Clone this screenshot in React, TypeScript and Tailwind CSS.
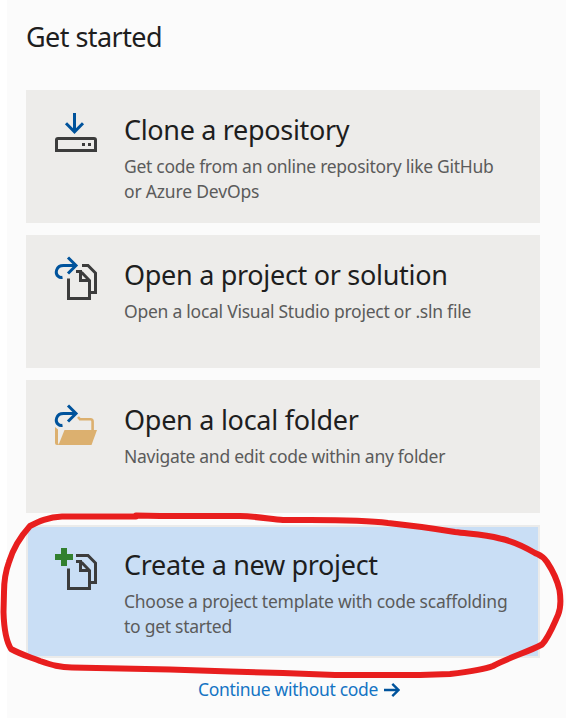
import type { ReactNode } from "react";

const NAVY = "#00539c";
const INK = "#3c3c3c";

function Pages() {
  return (
    <g fill="none" stroke={INK} strokeWidth="3">
      <path d="M28.5 33.5V53.5H49.5V35.5L41.5 27.3" />
      <path d="M36 26.5H40.5V35.5H49.5" />
      <path d="M51 47.5H55.5V28L48 20.5H42" />
    </g>
  );
}

function OpenArrow() {
  return (
    <g fill="none" stroke={NAVY} strokeWidth="3">
      <path d="M36 20.5H23.5C16 20.5 14.5 28.5 18.5 31.5Q20 32.8 22.5 32.3" />
      <path d="M28 12.5L36 20.5L28 28.5" />
    </g>
  );
}

function Icon({ children }: { children: ReactNode }) {
  return (
    <svg className="mt-5 h-12 w-12 shrink-0" viewBox="12 10 48 48">
      {children}
    </svg>
  );
}

const cards = [
  {
    title: "Clone a repository",
    titleClass: "tracking-[-0.33px]",
    lines: [
      { text: "Get code from an online repository like GitHub", cls: "tracking-[-0.28px]" },
      { text: "or Azure DevOps", cls: "tracking-[-0.18px]" },
    ],
    icon: (
      <Icon>
        <path d="M34.5 13V31M26 23.3L34.5 31.8L43 23.3" fill="none" stroke={NAVY} strokeWidth="3" />
        <path d="M16.5 50.5V40Q16.5 38.5 18 38.5H54Q55.5 38.5 55.5 40V50.5Z" fill="none" stroke={INK} strokeWidth="3" />
        <path d="M42 43h3v3h-3zM48 43h3v3h-3z" fill={INK} />
      </Icon>
    ),
  },
  {
    title: "Open a project or solution",
    titleClass: "tracking-[-0.3px]",
    lines: [{ text: "Open a local Visual Studio project or .sln file", cls: "tracking-[-0.25px]" }],
    icon: (
      <Icon>
        <Pages />
        <OpenArrow />
      </Icon>
    ),
  },
  {
    title: "Open a local folder",
    titleClass: "tracking-[-0.27px]",
    lines: [{ text: "Navigate and edit code within any folder", cls: "tracking-[-0.28px]" }],
    icon: (
      <Icon>
        <path d="M38 27L40 29.3H50.5Q52.6 29.3 52.6 31.5V41" fill="none" stroke="#dcb06f" strokeWidth="2.6" />
        <path d="M15 37L18 39.5V53L19 55H17Q15 55 15 53Z" fill="#dcb06f" />
        <path d="M24.5 40H57L51.5 55H18.5Z" fill="#dcb06f" />
        <g transform="translate(0 3)">
          <OpenArrow />
        </g>
      </Icon>
    ),
  },
  {
    title: "Create a new project",
    titleClass: "tracking-[-0.33px]",
    selected: true,
    lines: [
      { text: "Choose a project template with code scaffolding", cls: "tracking-[-0.25px]" },
      { text: "to get started", cls: "tracking-[-0.27px]" },
    ],
    icon: (
      <Icon>
        <Pages />
        <path d="M36 20.5H43" stroke={INK} strokeWidth="3" />
        <path d="M21 13h6v6h6v6h-6v6h-6v-6h-6v-6h6z" fill="#32802f" />
      </Icon>
    ),
  },
];

export default function App() {
  return (
    <div className="relative h-[718px] w-[566px] overflow-hidden bg-white pl-[7px] font-['Noto_Sans',sans-serif]">
      <main className="flex h-full flex-col bg-[#fbfbfb] pl-[19px]">
        <h1 className="h-[90px] pt-[19px] text-[27px] leading-9 whitespace-nowrap text-[#1e1e1e]">
          <span className="tracking-[-0.56px]">Get started</span>
        </h1>
        <div className="flex w-[514px] flex-col gap-3">
          {cards.map((card) => (
            <button
              key={card.title}
              type="button"
              className={`flex h-[133px] items-start border-2 text-left ${
                card.selected ? "border-[#ebebea] bg-[#c9def5]" : "border-[#edecea] bg-[#edecea]"
              }`}
            >
              <span className="-mt-0.5 flex gap-6 pl-6">
                {card.icon}
                <span className="flex flex-col pt-[22px] whitespace-nowrap">
                  <span className="text-[27px] leading-9 text-[#1e1e1e]">
                    <span className={card.titleClass}>{card.title}</span>
                  </span>
                  <span className="mt-1.5 flex flex-col text-[17.5px] leading-[25px] text-[#5b5b5b]">
                    {card.lines.map((line) => (
                      <span key={line.text} className={line.cls}>
                        {line.text}
                      </span>
                    ))}
                  </span>
                </span>
              </span>
            </button>
          ))}
        </div>
        <a className="mt-[19px] flex items-center pl-[172px] text-[17.5px] leading-[25px] whitespace-nowrap text-[#1474c4]">
          <span className="w-[186px] tracking-[-0.31px]">Continue without code</span>
          <svg className="h-4 w-4 shrink-0" viewBox="0 0 16 16" fill="none" stroke={NAVY} strokeWidth="2.4">
            <path d="M0 8H14M8.3 1.8L14.5 8L8.3 14.2" />
          </svg>
        </a>
      </main>
      <svg className="pointer-events-none absolute inset-0 h-full w-full" viewBox="0 0 566 718" fill="none">
        <path
          d="M136 516.5H62C48 517 38 522 30 526C20 537 13 549 9 562C5 573 4 580 4 592L3.5 612C4 630 6 641 11 649C22 655 30 657 40 661C52 665 60 667.5 72 667.5L170 669.5L230 671.5L283 673L335 675H420L450 674C468 672 483 670 493 666C510 657 528 652 542 644.5C549 637 553 626 558 615C561 608 561 600 559.5 590C557 579 551 568 547 562C542 555 539 555 535 553C523 546 512 541 500 538.5C484 534 470 534 455 532C430 528 408 525 388 523C365 520 340 520 310 520H283C270 519 258 516.5 240 516H160L136 515.5"
          stroke="#e81e1e"
          strokeWidth="6"
          strokeLinecap="round"
          strokeLinejoin="round"
        />
      </svg>
    </div>
  );
}
